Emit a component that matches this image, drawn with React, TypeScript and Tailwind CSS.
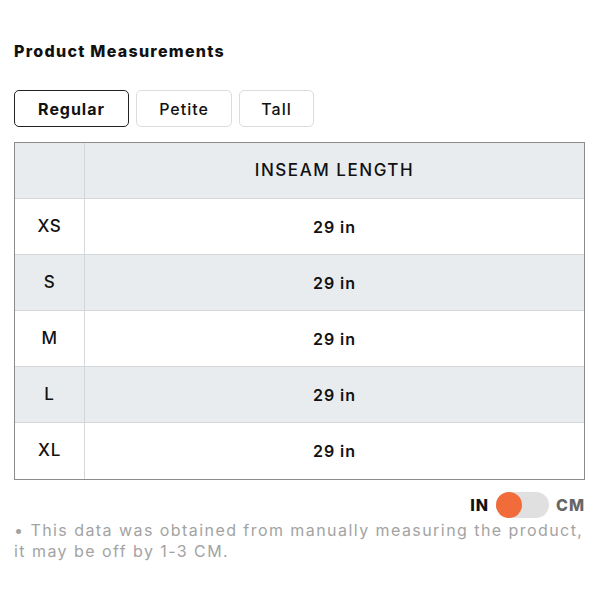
const ROWS = [
  { size: "XS", value: "29 in" },
  { size: "S", value: "29 in" },
  { size: "M", value: "29 in" },
  { size: "L", value: "29 in" },
  { size: "XL", value: "29 in" },
];

const FITS = ["Regular", "Petite", "Tall"];

export default function App() {
  return (
    <div className="w-[600px] h-[600px] bg-white px-[14px] pt-[41px] text-[#111] font-['Inter',sans-serif]">
      <h2 className="text-[16px] font-extrabold tracking-[0.08em] leading-[20px]">Product Measurements</h2>

      <div className="flex gap-[7px] mt-[29px]">
        {FITS.map((f, i) => (
          <button
            key={f}
            className={`h-[37px] rounded-[5px] text-[16px] tracking-[0.06em] ${
              i === 0
                ? "w-[115px] border-[1.5px] border-[#222] font-bold"
                : "border border-[#dcdcdc] font-medium " + (i === 1 ? "w-[96px]" : "w-[75px]")
            }`}
          >
            {f}
          </button>
        ))}
      </div>

      <div className="mt-[15px] w-[571px] border border-[#8c8c8c]">
        <div className="flex h-[56px] bg-[#e9ecee] border-b border-[#d4d6d8]">
          <div className="w-[70px] border-r border-[#d4d6d8]" />
          <div className="flex-1 flex items-center justify-center text-[17px] font-medium tracking-[0.09em]">
            INSEAM LENGTH
          </div>
        </div>
        {ROWS.map((r, i) => (
          <div
            key={r.size}
            className={`flex h-[56px] ${i % 2 === 1 ? "bg-[#e9ecee]" : "bg-white"} ${
              i < ROWS.length - 1 ? "border-b border-[#d4d6d8]" : ""
            }`}
          >
            <div className="w-[70px] border-r border-[#d4d6d8] flex items-center justify-center text-[17px] font-medium tracking-[0.04em]">
              {r.size}
            </div>
            <div className="flex-1 flex items-center justify-center text-[16px] font-semibold tracking-[0.06em]">
              {r.value}
            </div>
          </div>
        ))}
      </div>

      <div className="flex justify-end items-center gap-[7px] mt-[12px] w-[571px]">
        <span className="text-[16px] font-extrabold tracking-[0.06em]">IN</span>
        <div className="relative w-[53px] h-[26px] rounded-full bg-[#e0e0e0]">
          <div className="absolute left-0 top-0 w-[26px] h-[26px] rounded-full bg-[#f26b3a]" />
        </div>
        <span className="text-[16px] font-extrabold tracking-[0.06em] text-[#666]">CM</span>
      </div>

      <p className="mt-[2px] w-[582px] text-[16px] leading-[21px] tracking-[0.09em] text-[#a3a3a3]">
        • This data was obtained from manually measuring the product, it may be off by 1-3 CM.
      </p>
    </div>
  );
}
